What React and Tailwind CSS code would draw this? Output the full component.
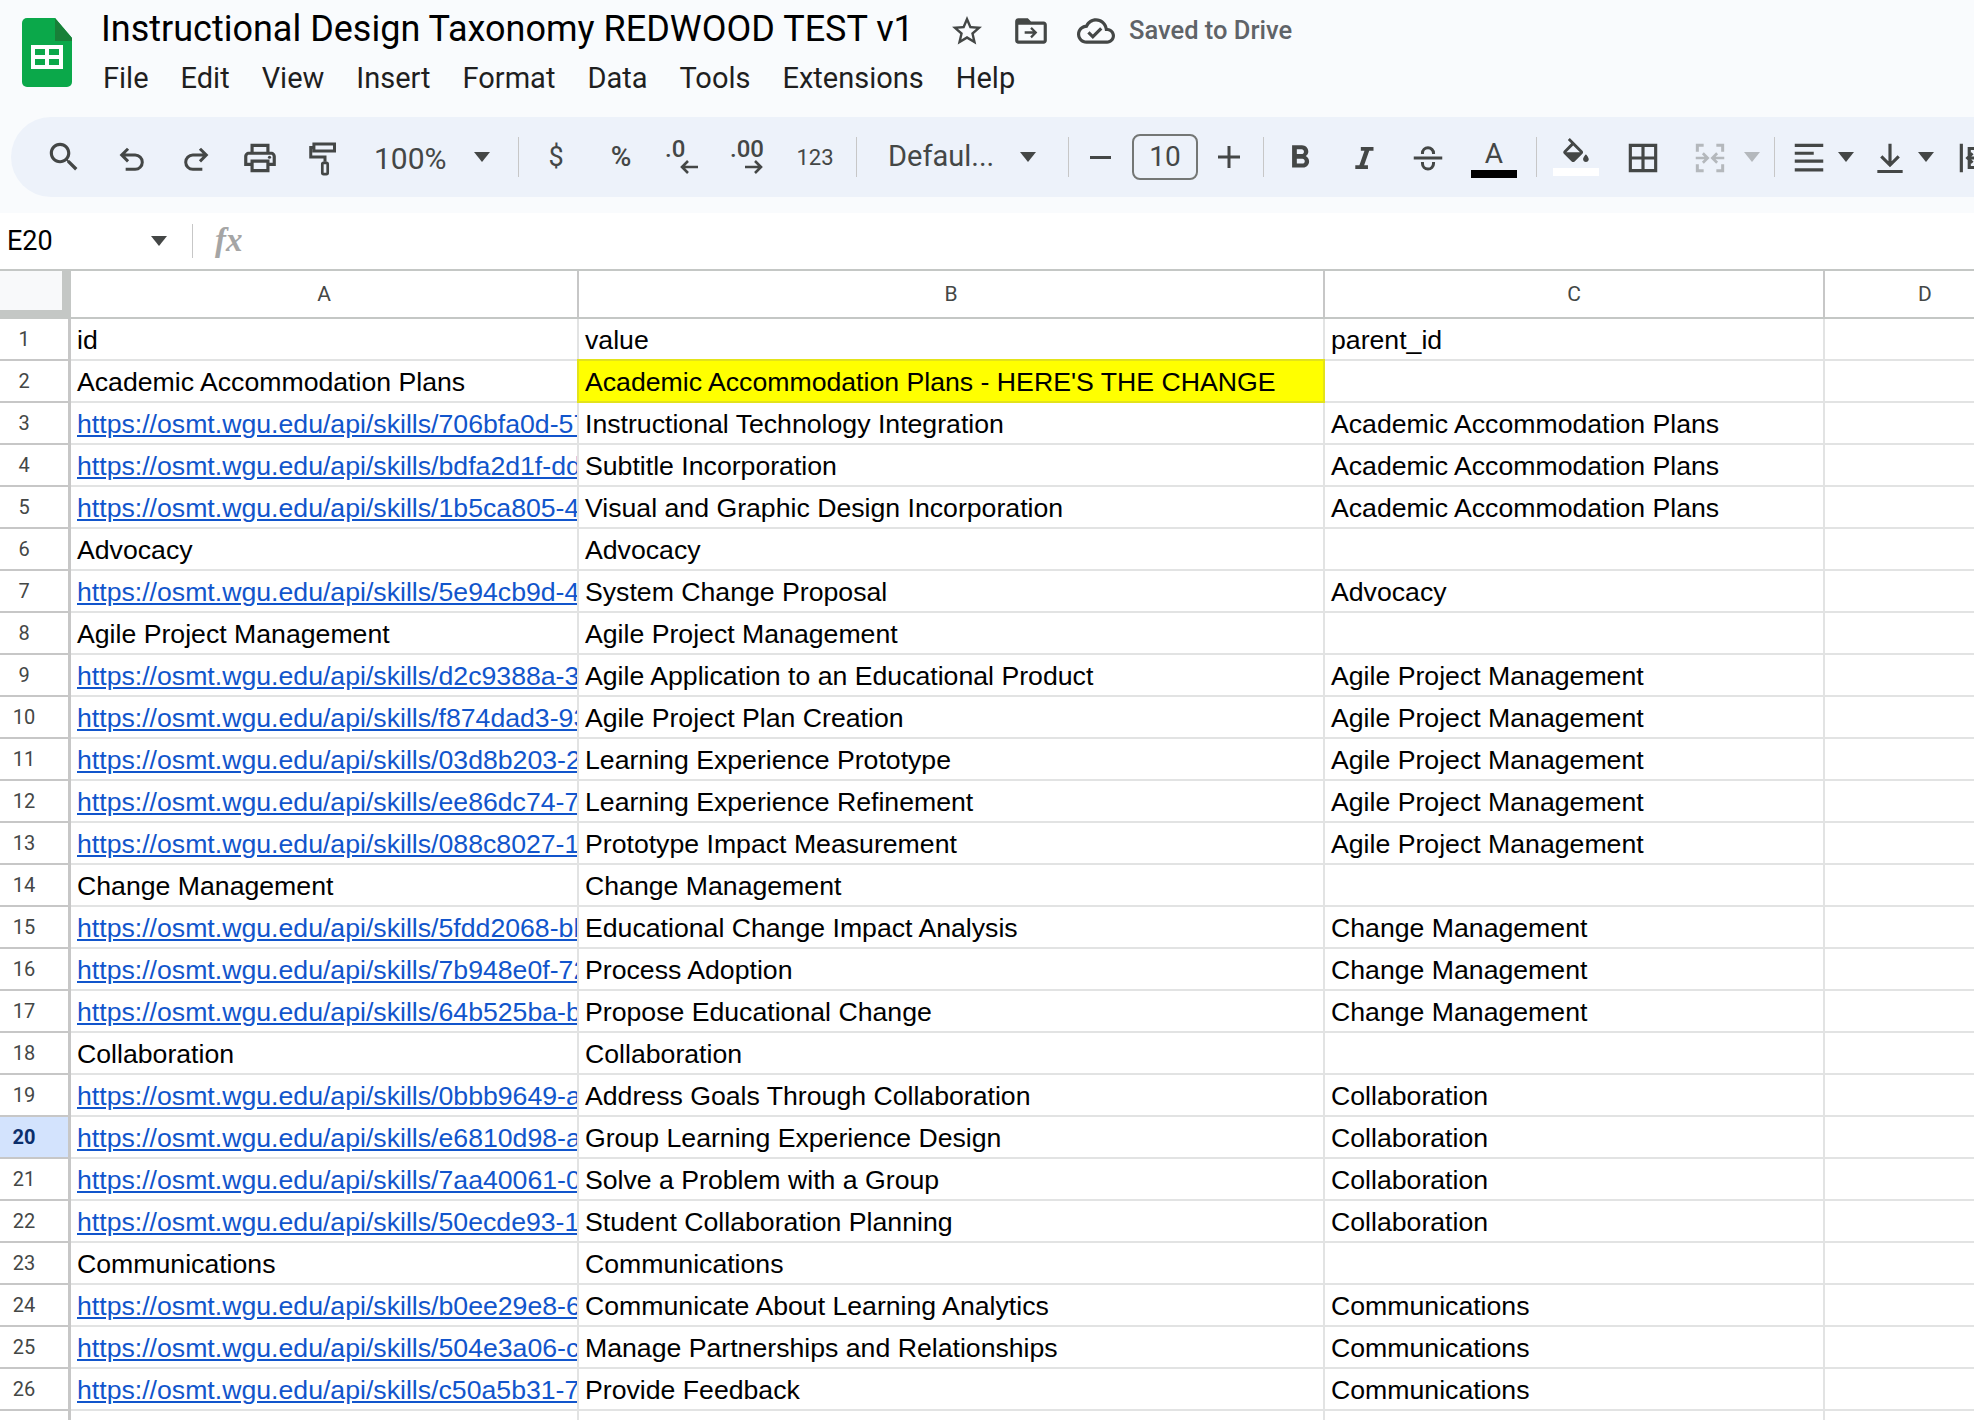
import React from 'react';

const URL_BASE = 'https://osmt.wgu.edu/api/skills/';

const rows = [
  { id: 'id', value: 'value', parent: 'parent_id' },
  { id: 'Academic Accommodation Plans', value: "Academic Accommodation Plans - HERE'S THE CHANGE", parent: '', highlight: true },
  { link: '706bfa0d-57a1-4c2e', value: 'Instructional Technology Integration', parent: 'Academic Accommodation Plans' },
  { link: 'bdfa2d1f-dd31-4a0e', value: 'Subtitle Incorporation', parent: 'Academic Accommodation Plans' },
  { link: '1b5ca805-4e7c-4b19', value: 'Visual and Graphic Design Incorporation', parent: 'Academic Accommodation Plans' },
  { id: 'Advocacy', value: 'Advocacy', parent: '' },
  { link: '5e94cb9d-4f02-4d88', value: 'System Change Proposal', parent: 'Advocacy' },
  { id: 'Agile Project Management', value: 'Agile Project Management', parent: '' },
  { link: 'd2c9388a-3b6e-4107', value: 'Agile Application to an Educational Product', parent: 'Agile Project Management' },
  { link: 'f874dad3-93c2-4e51', value: 'Agile Project Plan Creation', parent: 'Agile Project Management' },
  { link: '03d8b203-2a7d-4f60', value: 'Learning Experience Prototype', parent: 'Agile Project Management' },
  { link: 'ee86dc74-7c1b-4a39', value: 'Learning Experience Refinement', parent: 'Agile Project Management' },
  { link: '088c8027-1d4f-4c72', value: 'Prototype Impact Measurement', parent: 'Agile Project Management' },
  { id: 'Change Management', value: 'Change Management', parent: '' },
  { link: '5fdd2068-bb90-4e13', value: 'Educational Change Impact Analysis', parent: 'Change Management' },
  { link: '7b948e0f-72a6-4d05', value: 'Process Adoption', parent: 'Change Management' },
  { link: '64b525ba-b8e3-4f27', value: 'Propose Educational Change', parent: 'Change Management' },
  { id: 'Collaboration', value: 'Collaboration', parent: '' },
  { link: '0bbb9649-a2c4-4b68', value: 'Address Goals Through Collaboration', parent: 'Collaboration' },
  { link: 'e6810d98-a5f1-4c94', value: 'Group Learning Experience Design', parent: 'Collaboration', selected: true },
  { link: '7aa40061-0e3d-4a57', value: 'Solve a Problem with a Group', parent: 'Collaboration' },
  { link: '50ecde93-1b7a-4d26', value: 'Student Collaboration Planning', parent: 'Collaboration' },
  { id: 'Communications', value: 'Communications', parent: '' },
  { link: 'b0ee29e8-6c4d-4e80', value: 'Communicate About Learning Analytics', parent: 'Communications' },
  { link: '504e3a06-c9f2-4b31', value: 'Manage Partnerships and Relationships', parent: 'Communications' },
  { link: 'c50a5b31-7d08-4f6c', value: 'Provide Feedback', parent: 'Communications' },
  { id: '', value: '', parent: '' },
];

const Icon = ({ children, size = 38, fill = '#444746', className = '' }) => (
  <svg width={size} height={size} viewBox="0 0 24 24" fill={fill} className={className}>
    {children}
  </svg>
);

const Caret = ({ color = '#444746' }) => (
  <svg width="18" height="10" viewBox="0 0 18 10" fill={color}>
    <path d="M1 0h16L9 10z" />
  </svg>
);

const Sep = () => <div className="w-px h-[40px] bg-[#c7c7c7] shrink-0" />;

const Slot = ({ className = '', children }) => (
  <div className={`flex items-center justify-center shrink-0 h-full ${className}`}>{children}</div>
);

const Logo = () => (
  <svg width="50" height="69" viewBox="0 0 50 69" className="shrink-0">
    <path d="M5 0h28l17 20v44a5 5 0 0 1-5 5H5a5 5 0 0 1-5-5V5a5 5 0 0 1 5-5z" fill="#0ba84a" />
    <path d="M33 0l17 20v3H33z" fill="#188038" />
    <path d="M9 27h32v24H9z" fill="#fff" />
    <path d="M13 31h10v6H13zM27 31h10v6H27zM13 41h10v6H13zM27 41h10v6H27z" fill="#0ba84a" />
  </svg>
);

const Toolbar = () => (
  <div className="ml-[11px] h-[80px] bg-[#edf2fa] rounded-l-[40px] flex items-center pl-[21px] overflow-hidden text-[#444746] font-['Roboto',sans-serif]">
    <Slot className="w-[64px]">
      <Icon><path d="M15.5 14h-.79l-.28-.27C15.41 12.59 16 11.11 16 9.5 16 5.91 13.09 3 9.5 3S3 5.91 3 9.5 5.91 16 9.5 16c1.61 0 3.09-.59 4.23-1.57l.27.28v.79l5 4.99L20.49 19l-4.99-5zm-6 0C7.01 14 5 11.99 5 9.5S7.01 5 9.5 5 14 7.01 14 9.5 11.99 14 9.5 14z" /></Icon>
    </Slot>
    <Slot className="w-[64px] ml-[4px]">
      <Icon fill="none" className="mt-[4px]">
        <path d="M9.5 5.500L5.500 9.500l4 4M5.500 9.500h8.500a4.500 4.500 0 0 1 0 9H8" stroke="#444746" strokeWidth="1.9" />
      </Icon>
    </Slot>
    <Slot className="w-[64px]">
      <Icon fill="none" className="mt-[4px]">
        <path d="M14.500 5.500l4 4-4 4M18.500 9.500H10a4.500 4.500 0 0 0 0 9h6" stroke="#444746" strokeWidth="1.9" />
      </Icon>
    </Slot>
    <Slot className="w-[64px]">
      <Icon className="mt-[1px]">
        <path d="M19 8h-1V3H6v5H5c-1.66 0-3 1.34-3 3v6h4v4h12v-4h4v-6c0-1.66-1.34-3-3-3zM8 5h8v3H8V5zm8 12v2H8v-4h8v2zm2-2v-2H6v2H4v-4c0-.55.45-1 1-1h14c.55 0 1 .45 1 1v4h-2z" />
        <circle cx="18" cy="11.5" r="1" />
      </Icon>
    </Slot>
    <Slot className="w-[64px] ml-[1px]">
      <Icon fill="none" className="mt-[3px]">
        <path d="M5 2.500h13v4.500H5zM5 4.700H3v6h9v3" stroke="#444746" strokeWidth="1.9" />
        <rect x="10.300" y="14.500" width="3.400" height="7" rx="0.8" stroke="#444746" strokeWidth="1.7" />
      </Icon>
    </Slot>
    <span className="w-[108px] pl-[17px] pt-[3px] text-[30px] shrink-0">100%</span>
    <Slot className="w-[34px]"><Caret /></Slot>
    <div className="ml-[19px]"><Sep /></div>
    <Slot className="w-[64px] ml-[5px] text-[27px]">$</Slot>
    <Slot className="w-[62px] ml-[2px] text-[28px] font-medium">%</Slot>
    <Slot className="w-[64px] -ml-[2px]">
      <svg width="40" height="42" viewBox="0 0 40 42" fill="none">
        <text x="3" y="21" fontFamily="Roboto, sans-serif" fontSize="24" fontWeight="500" fill="#444746">.0</text>
        <path d="M36 31H20M26 25l-6 6 6 6" stroke="#444746" strokeWidth="2.6" />
      </svg>
    </Slot>
    <Slot className="w-[64px] ml-[3px]">
      <svg width="42" height="42" viewBox="0 0 42 42" fill="none">
        <text x="2" y="21" fontFamily="Roboto, sans-serif" fontSize="24" fontWeight="500" fill="#444746">.00</text>
        <path d="M17 31h16M27 25l6 6-6 6" stroke="#444746" strokeWidth="2.6" />
      </svg>
    </Slot>
    <Slot className="w-[64px] ml-[2px] text-[22px]">123</Slot>
    <div className="ml-[9px]"><Sep /></div>
    <span className="w-[154px] pl-[31px] text-[29px] shrink-0">Defaul...</span>
    <Slot className="w-[34px]"><Caret /></Slot>
    <div className="ml-[23px]"><Sep /></div>
    <Slot className="w-[56px] ml-[3px]">
      <div className="w-[21px] h-[3px] bg-[#444746]" />
    </Slot>
    <div className="ml-[4px] w-[66px] h-[46px] border-2 border-[#747775] rounded-[8px] flex items-center justify-center text-[28px] shrink-0">10</div>
    <Slot className="w-[54px] ml-[4px]">
      <svg width="22" height="22" viewBox="0 0 22 22" fill="#444746"><path d="M9.500 0h3v9.500H22v3h-9.500V22h-3v-9.500H0v-3h9.500z" /></svg>
    </Slot>
    <div className="ml-[7px]"><Sep /></div>
    <Slot className="w-[64px] ml-[4px]">
      <Icon className="mt-[2px]"><path d="M15.6 10.79c.97-.67 1.65-1.77 1.65-2.79 0-2.26-1.75-4-4-4H7v14h7.04c2.09 0 3.71-1.7 3.71-3.79 0-1.52-.86-2.82-2.15-3.42zM10 6.5h3c.83 0 1.5.67 1.5 1.5s-.67 1.5-1.5 1.5h-3v-3zm3.5 9H10v-3h3.5c.83 0 1.5.67 1.5 1.5s-.67 1.5-1.5 1.5z" /></Icon>
    </Slot>
    <Slot className="w-[64px]">
      <Icon className="mt-[2px]"><path d="M10 5v2.400h2.300L9.100 16.600H6.500V19h8v-2.400h-2.400l3.200-9.200H18V5z" /></Icon>
    </Slot>
    <Slot className="w-[64px]">
      <Icon fill="none" className="mt-[2px]">
        <path d="M3 12h18" stroke="#444746" strokeWidth="1.9" />
        <path d="M8.500 9.500V9a3.500 3.500 0 0 1 7 0v.5M8.500 14.500v1a3.500 3.500 0 0 0 7 0v-1" stroke="#444746" strokeWidth="1.9" />
      </Icon>
    </Slot>
    <Slot className="w-[64px] ml-[2px]">
      <div className="flex flex-col items-center">
        <span className="text-[28px] leading-[34px] h-[31px]">A</span>
        <div className="w-[46px] h-[8px] bg-black mt-[2px]" />
      </div>
    </Slot>
    <div className="ml-[10px]"><Sep /></div>
    <Slot className="w-[64px] ml-[7px]">
      <div className="flex flex-col items-center">
        <Icon size={34}>
          <path d="M16.56 8.94L7.62 0 6.21 1.41l2.38 2.38-5.15 5.15c-.59.59-.59 1.54 0 2.12l5.5 5.5c.29.29.68.44 1.06.44s.77-.15 1.06-.44l5.5-5.5c.59-.58.59-1.53 0-2.12zM5.21 10L10 5.21 14.79 10H5.21zM19 11.5s-2 2.17-2 3.5c0 1.1.9 2 2 2s2-.9 2-2c0-1.33-2-3.5-2-3.5z" />
        </Icon>
        <div className="w-[46px] h-[8px] bg-white -mt-[4px]" />
      </div>
    </Slot>
    <Slot className="w-[64px] ml-[3px]">
      <Icon fill="none" className="mt-[2px]"><path d="M4 4h16v16H4zM12 4v16M4 12h16" stroke="#444746" strokeWidth="2" /></Icon>
    </Slot>
    <Slot className="w-[64px] ml-[3px]">
      <Icon fill="none" className="mt-[2px]">
        <path d="M8 4H4v4M4 16v4h4M16 4h4v4M20 16v4h-4" stroke="#b4b8bc" strokeWidth="1.9" />
        <path d="M3 12h7M7.500 9l3 3-3 3M21 12h-7M16.500 9l-3 3 3 3" stroke="#b4b8bc" strokeWidth="1.7" />
      </Icon>
    </Slot>
    <Slot className="w-[20px]"><Caret color="#b4b8bc" /></Slot>
    <div className="ml-[12px]"><Sep /></div>
    <Slot className="w-[56px] ml-[6px]">
      <Icon fill="none" className="mt-[2px]"><path d="M3 4h18M3 9h12M3 14h18M3 19.500h18" stroke="#444746" strokeWidth="2" /></Icon>
    </Slot>
    <Slot className="w-[18px]"><Caret /></Slot>
    <Slot className="w-[52px] ml-[9px]">
      <Icon fill="none" className="mt-[2px]"><path d="M12 3v13M6.500 11l5.500 5.500 5.500-5.500M4 20.500h16" stroke="#444746" strokeWidth="2" /></Icon>
    </Slot>
    <Slot className="w-[20px]"><Caret /></Slot>
    <Slot className="w-[38px] ml-[19px]">
      <Icon fill="none" className="mt-[2px]"><path d="M4 3v18M21 6H9v12h12M14 12H8M11 9l-3 3 3 3" stroke="#444746" strokeWidth="2" /></Icon>
    </Slot>
  </div>
);

const Cell = ({ className = '', children }) => (
  <div className={`h-full shrink-0 overflow-hidden whitespace-nowrap border-r-2 border-[#e2e3e3] flex items-center pt-[2px] ${className}`}>
    {children}
  </div>
);

const Row = ({ index, row }) => (
  <div className="flex h-[42px] shrink-0 border-b-2 border-[#e2e3e3] box-border">
    <div className={`w-[71px] shrink-0 h-[42px] border-b-2 border-r-[3px] border-[#c7c7c7] flex items-center justify-center pr-[20px] font-['Roboto',sans-serif] text-[20px] ${row.selected ? 'bg-[#d3e3fd] text-[#0b2e6b] font-bold' : 'text-[#444746]'}`}>
      {index}
    </div>
    <Cell className="w-[508px] pl-[6px]">
      {row.link ? (
        <span className="text-[#1155cc] underline">{URL_BASE + row.link}</span>
      ) : (
        row.id
      )}
    </Cell>
    {row.highlight ? (
      <div className="w-[748px] h-[44px] -mt-[2px] -ml-[2px] shrink-0 overflow-hidden whitespace-nowrap border-2 border-[#e3e31a] bg-[#ffff00] flex items-center pl-[6px] pt-[2px]">
        {row.value}
      </div>
    ) : (
      <Cell className="w-[746px] pl-[6px]">{row.value}</Cell>
    )}
    <Cell className="w-[500px] pl-[6px]">{row.parent}</Cell>
    <div className="flex-1" />
  </div>
);

export default function App() {
  return (
    <div className="w-[1974px] h-[1420px] overflow-hidden bg-white flex flex-col">
      <div className="h-[213px] shrink-0 bg-[#f9fbfd]">
        <div className="h-[117px] flex pl-[22px] pt-[18px]">
          <Logo />
          <div className="ml-[29px] -mt-[18px] flex flex-col">
            <div className="flex items-center h-[58px]">
              <span className="font-['Roboto',sans-serif] text-[36px] text-black w-[848px]">Instructional Design Taxonomy REDWOOD TEST v1</span>
              <Icon size={36} className="mt-[4px]">
                <path d="M22 9.24l-7.19-.62L12 2 9.19 8.63 2 9.24l5.46 4.73L5.82 21 12 17.27 18.18 21l-1.63-7.03L22 9.240zM12 15.4l-3.76 2.27 1-4.28-3.32-2.88 4.38-.38L12 6.1l1.71 4.04 4.38.38-3.32 2.88 1 4.28L12 15.4z" />
              </Icon>
              <Icon size={38} className="ml-[27px] mt-[4px]">
                <path d="M20 6h-8l-2-2H4c-1.110 0-2 .89-2 2v12c0 1.110.89 2 2 2h16c1.110 0 2-.89 2-2V8c0-1.110-.89-2-2-2zm0 12H4V8h16v10z" />
                <path d="M12.500 9.500l3.500 3.500-3.500 3.500-1-1 1.700-1.700H8v-1.600h5.200L11.500 10.500z" />
              </Icon>
              <Icon size={38} className="ml-[27px] mt-[4px]">
                <path d="M19.350 10.040C18.670 6.590 15.640 4 12 4 9.110 4 6.600 5.640 5.350 8.040 2.340 8.360 0 10.910 0 14c0 3.310 2.690 6 6 6h13c2.760 0 5-2.240 5-5 0-2.640-2.050-4.780-4.650-4.960zM19 18H6c-2.210 0-4-1.790-4-4 0-2.050 1.530-3.760 3.560-3.970l1.070-.11.5-.95C8.080 7.140 9.940 6 12 6c2.620 0 4.880 1.860 5.390 4.430l.3 1.500 1.530.11c1.560.1 2.780 1.410 2.780 2.960 0 1.650-1.350 3-3 3zm-9-3.820l-2.090-2.090L6.500 13.500 10 17l6.010-6.010-1.410-1.410z" />
              </Icon>
              <span className="ml-[14px] mt-[3px] font-['Roboto',sans-serif] font-medium text-[25.5px] text-[#5f6368]">Saved to Drive</span>
            </div>
            <div className="flex gap-[32px] -mt-[1px] ml-[2px] font-['Roboto',sans-serif] text-[29px] text-[#1f1f1f]">
              <span>File</span>
              <span>Edit</span>
              <span>View</span>
              <span>Insert</span>
              <span>Format</span>
              <span>Data</span>
              <span>Tools</span>
              <span>Extensions</span>
              <span>Help</span>
            </div>
          </div>
        </div>
        <Toolbar />
      </div>

      <div className="h-[56px] shrink-0 flex items-center font-['Roboto',sans-serif]">
        <span className="w-[150px] pl-[7px] text-[27px] text-black">E20</span>
        <Caret />
        <div className="ml-[24px] w-px h-[34px] bg-[#c7c7c7]" />
        <span className="ml-[22px] font-['Liberation_Serif',serif] italic font-bold text-[33px] text-[#a5a5a5]">fx</span>
      </div>

      <div className="flex h-[50px] shrink-0 border-t-2 border-b-2 border-[#c4c7c5] box-border font-['Roboto',sans-serif] text-[21px] text-[#444746]">
        <div className="w-[71px] shrink-0 relative border-r-[3px] border-[#c4c7c5] bg-[#f8f9fa]">
          <div className="absolute right-0 top-0 w-[6px] h-full bg-[#c4c7c5]" />
          <div className="absolute left-0 right-0 bottom-0 h-[7px] bg-[#c4c7c5]" />
        </div>
        <div className="w-[508px] shrink-0 border-r-2 border-[#c7c7c7] flex items-center justify-center pt-[2px]">A</div>
        <div className="w-[746px] shrink-0 border-r-2 border-[#c7c7c7] flex items-center justify-center pt-[2px]">B</div>
        <div className="w-[500px] shrink-0 border-r-2 border-[#c7c7c7] flex items-center justify-center pt-[2px]">C</div>
        <div className="w-[200px] shrink-0 flex items-center justify-center pt-[2px]">D</div>
      </div>

      <div className="font-['Liberation_Sans',sans-serif] text-[26.67px] text-black">
        {rows.map((row, i) => (
          <Row key={i} index={i === 26 ? '' : i + 1} row={row} />
        ))}
      </div>
    </div>
  );
}
